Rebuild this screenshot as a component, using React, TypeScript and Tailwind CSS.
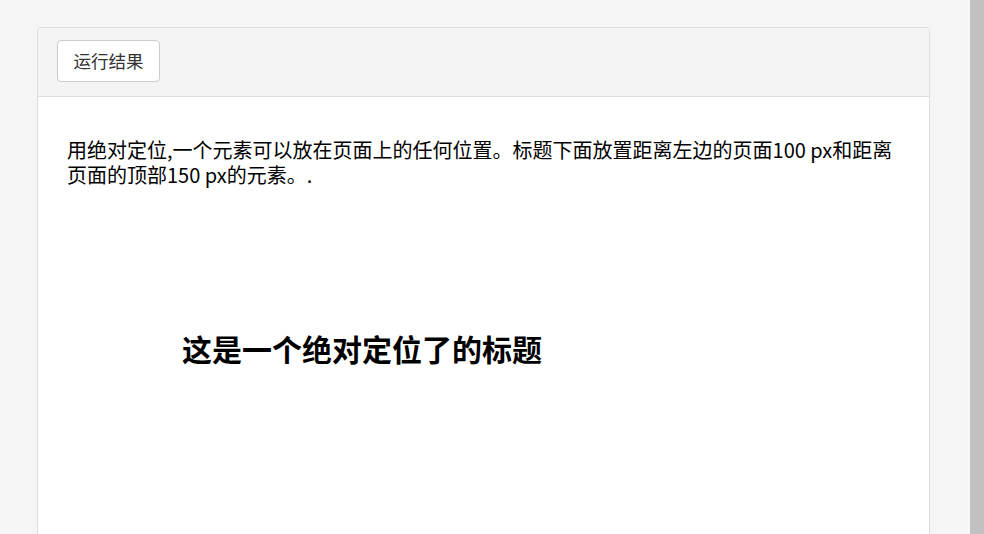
export default function App() {
  return (
    <div
      className="flex h-[534px] w-[984px] overflow-hidden bg-[#f5f5f5]"
      style={{ fontFamily: '"Noto Sans CJK SC", "Noto Sans", sans-serif' }}
    >
      <div className="flex-1 pl-[37px] pr-[38px] pt-[27px]">
        <div className="h-[600px] rounded-[4px] border border-[#dddddd] bg-white">
          <div className="h-[69px] rounded-t-[4px] border-b border-[#dddddd] bg-[#f4f4f4] px-[19px] pt-[12px]">
            <button className="flex h-[42px] w-[103px] items-center justify-center rounded-[4px] border border-[#cccccc] bg-white text-[17.5px] text-[#333333]">
              运行结果
            </button>
          </div>
          <div className="pl-[29px] pt-[40px]">
            <p className="text-[20px] leading-[25px] text-black">
              用绝对定位,一个元素可以放在页面上的任何位置。标题下面放置距离左边的页面100 px和距离
              <br />
              页面的顶部150 px的元素。.
            </p>
            <h2 className="ml-[115px] mt-[141px] text-[30px] font-bold leading-[40px] text-black">
              这是一个绝对定位了的标题
            </h2>
          </div>
        </div>
      </div>
      <div className="w-[2px] bg-[#f8f8f8]" />
      <div className="w-[14px] bg-[#c1c1c1]" />
    </div>
  );
}
